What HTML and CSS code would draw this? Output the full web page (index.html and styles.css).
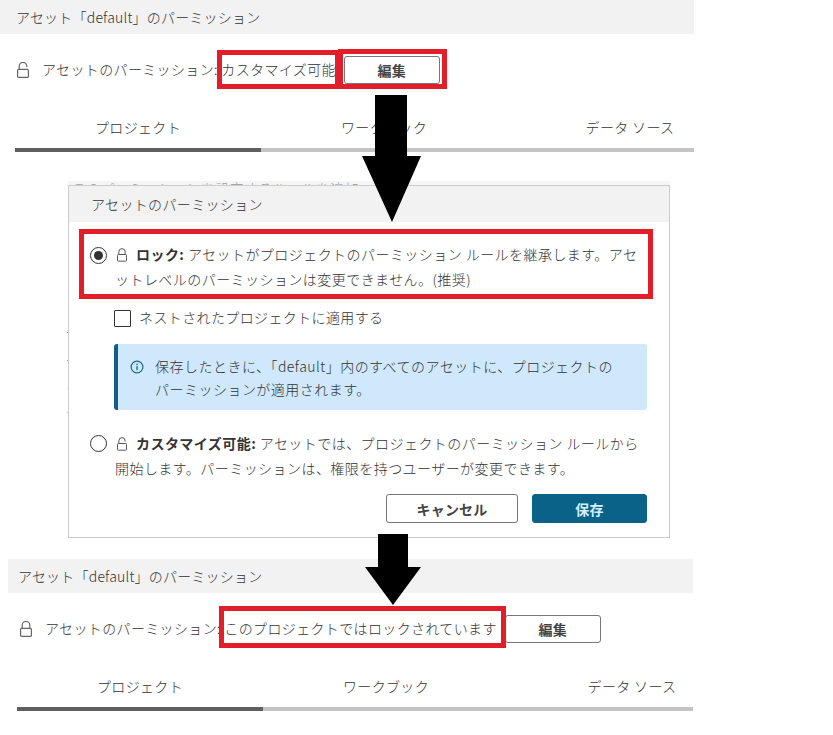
FILE: index.html
```html
<!DOCTYPE html>
<html lang="ja">
<head>
<meta charset="utf-8">
<title>アセットのパーミッション</title>
<link rel="stylesheet" href="styles.css">
</head>
<body>
<svg class="icon-defs" width="0" height="0" aria-hidden="true">
  <symbol id="lock-open" viewBox="0 0 12 16"><path d="M2.2 7V4.2a3.8 3.8 0 0 1 7.6 0v.9" fill="none" stroke="currentColor" stroke-width="1.2"/><rect x=".6" y="7.4" width="10.8" height="8" rx="1" fill="none" stroke="currentColor" stroke-width="1.2"/></symbol>
  <symbol id="lock-closed" viewBox="0 0 12 16"><path d="M2.2 7.4V4.2a3.8 3.8 0 0 1 7.6 0v3.2" fill="none" stroke="currentColor" stroke-width="1.2"/><rect x=".6" y="7.4" width="10.8" height="8" rx="1" fill="none" stroke="currentColor" stroke-width="1.2"/></symbol>
</svg>
<main class="page">
  <section class="panel panel-first">
    <h2 class="panel-title">アセット「default」のパーミッション</h2>
    <div class="perm-row">
      <svg class="lock lock-row"><use href="#lock-open"/></svg>
      <span class="perm-label">アセットのパーミッション: カスタマイズ可能</span>
      <button class="btn btn-edit">編集</button>
    </div>
    <div class="tabs">
      <div class="tab tab-active">プロジェクト</div>
      <div class="tab">ワークブック</div>
      <div class="tab">データ ソース</div>
    </div>
  </section>

  <div class="peek"><span class="peek-text">このパーミッションを設定するルールを追加</span></div>
  <section class="dialog">
    <h2 class="dialog-title">アセットのパーミッション</h2>
    <div class="option option-first">
      <span class="radio radio-on"></span>
      <p class="option-text"><svg class="lock lock-inline"><use href="#lock-closed"/></svg><b>ロック:</b> アセットがプロジェクトのパーミッション ルールを継承します。アセ<br>ットレベルのパーミッションは変更できません。(推奨)</p>
    </div>
    <label class="check-row"><span class="check"></span><span class="check-text">ネストされたプロジェクトに適用する</span></label>
    <div class="info">
      <svg class="info-icon" viewBox="0 0 14 14"><circle cx="7" cy="7" r="5.9" fill="none" stroke="currentColor" stroke-width="1.2"/><rect x="6.4" y="6" width="1.3" height="4.2" fill="currentColor"/><rect x="6.4" y="3.6" width="1.3" height="1.4" fill="currentColor"/></svg>
      <p class="info-text">保存したときに、「default」内のすべてのアセットに、プロジェクトの<br>パーミッションが適用されます。</p>
    </div>
    <div class="option option-second">
      <span class="radio"></span>
      <p class="option-text"><svg class="lock lock-inline"><use href="#lock-open"/></svg><b>カスタマイズ可能:</b> アセットでは、プロジェクトのパーミッション ルールから<br>開始します。パーミッションは、権限を持つユーザーが変更できます。</p>
    </div>
    <div class="dialog-actions">
      <button class="btn btn-cancel">キャンセル</button>
      <button class="btn btn-save">保存</button>
    </div>
  </section>

  <section class="panel panel-last">
    <h2 class="panel-title">アセット「default」のパーミッション</h2>
    <div class="perm-row">
      <svg class="lock lock-row"><use href="#lock-closed"/></svg>
      <span class="perm-label">アセットのパーミッション: このプロジェクトではロックされています</span>
      <button class="btn btn-edit">編集</button>
    </div>
    <div class="tabs">
      <div class="tab tab-active">プロジェクト</div>
      <div class="tab">ワークブック</div>
      <div class="tab">データ ソース</div>
    </div>
  </section>

  <div class="mark mark-a"></div>
  <div class="mark mark-b"></div>
  <div class="mark mark-c"></div>
  <div class="mark mark-d"></div>
  <svg class="arrow arrow-a" viewBox="0 0 59 127"><path d="M13 0H45V61H59L30 127 0 61H13Z"/></svg>
  <svg class="arrow arrow-b" viewBox="0 0 56 71"><path d="M13 0H43V33H56L28 71 0 33H13Z"/></svg>
</main>
</body>
</html>
```

FILE: styles.css
```css
* { box-sizing: border-box; }
html, body { margin: 0; padding: 0; background: #fff; }
body {
  font-family: "Noto Sans CJK JP", "Noto Sans", sans-serif;
  font-size: 14px;
  font-weight: 300;
  color: #333;
  letter-spacing: .35px;
}
.icon-defs { position: absolute; }
.page { position: relative; width: 833px; height: 735px; overflow: hidden; display: flex; flex-direction: column; }
h2, p { margin: 0; font-weight: 300; font-size: 14px; }

.panel { display: flex; flex-direction: column; overflow: hidden; flex: none; }
.panel-first { width: 694px; --head: 16px; --row: 17px; --tabs: 15px; }
.panel-last { width: 685px; margin-left: 8px; margin-top: 21px; --head: 10px; --row: 12px; --tabs: 9px; }
.panel-title { height: 34px; line-height: 34px; background: #f2f2f2; padding-left: var(--head); letter-spacing: .2px; }
.perm-row { display: flex; align-items: center; height: 28px; margin-top: 22px; padding-left: var(--row); }
.lock { color: #666; flex: none; }
.lock-row { width: 12px; height: 16px; margin-right: 13px; }
.perm-label { white-space: pre; margin-bottom: 2px; letter-spacing: .36px; }
.btn {
  font-family: inherit; font-size: 14px; font-weight: 700; letter-spacing: .2px;
  background: #fff; color: #444; border: 1px solid #777; border-radius: 3px; padding: 0;
}
.btn-edit { width: 96px; height: 28px; margin-left: 8px; }
.panel-last .btn-edit { width: 96px; }
.tabs { display: flex; margin-top: 28px; margin-left: var(--tabs); width: 738px; }
.tab { width: 246px; height: 40px; line-height: 30px; text-align: center; border-bottom: 4px solid #c4c4c4; flex: none; }
.tab-active { border-bottom-color: #5f5f5f; }

.peek { width: 602px; height: 4px; margin: 29px 0 0 68px; background: #f5f5f5; overflow: hidden; flex: none; }
.peek-text { display: block; font-size: 14px; line-height: 20px; color: #999; margin-top: -3px; padding-left: 4px; white-space: nowrap; }
.dialog { position: relative; width: 602px; height: 353px; margin-left: 68px; border: 1px solid #ccc; flex: none; display: flex; flex-direction: column; }
.dialog::before { content: ""; position: absolute; left: -2px; top: 146px; width: 1px; height: 1px; background: #888; box-shadow: 0 28px #999, 0 56px #ddd, 0 80px #bbb; }
.dialog-title { height: 36px; line-height: 36px; background: #f2f2f2; padding-left: 22px; }
.option { display: flex; gap: 8px; padding-left: 21px; }
.option-first { margin-top: 20px; }
.option-second { margin-top: 21px; }
.option-text { line-height: 25px; white-space: nowrap; letter-spacing: .45px; }
.option-text b { font-weight: 700; }
.radio { width: 17px; height: 17px; border: 1.3px solid #333; border-radius: 50%; margin-top: 4px; flex: none; display: flex; align-items: center; justify-content: center; }
.option-first .radio { margin-top: 5px; }
.radio-on::after { content: ""; width: 9px; height: 9px; border-radius: 50%; background: #333; }
.lock-inline { width: 10px; height: 14px; margin: 0 9px 0 2px; vertical-align: -2px; color: #555; }
.check-row { display: flex; align-items: center; gap: 8px; height: 18px; margin: 17px 0 0 45px; letter-spacing: .38px; }
.check { width: 17px; height: 17px; border: 1.2px solid #333; flex: none; border-radius: 1px; }
.check-text { margin-bottom: 2px; }
.info {
  display: flex; gap: 11px; width: 533px; height: 66px; margin: 17px 0 0 45px; padding: 11px 0 0 12px;
  background: #cfe8fc; border-left: 4px solid #0f5f80; border-radius: 3px;
}
.info-icon { width: 14px; height: 14px; margin-top: 5px; color: #0f6a90; flex: none; }
.info-text { line-height: 22.5px; white-space: nowrap; letter-spacing: .48px; }
.dialog-actions { display: flex; justify-content: flex-end; gap: 14px; padding-right: 22px; margin-top: 13px; }
.btn-cancel { width: 132px; height: 29px; }
.btn-save { width: 115px; height: 29px; background: #0a6289; border-color: #0a6289; color: #d6eefa; }

.mark { position: absolute; border: 5px solid #e31e2b; }
.mark-a { left: 217px; top: 50px; width: 123px; height: 39px; }
.mark-b { left: 338px; top: 49px; width: 109px; height: 40px; }
.mark-c { left: 79px; top: 229px; width: 574px; height: 70px; }
.mark-d { left: 219px; top: 606px; width: 287px; height: 42px; }
.arrow { position: absolute; fill: #000; }
.arrow-a { left: 362px; top: 95px; width: 59px; height: 127px; }
.arrow-b { left: 365px; top: 534px; width: 56px; height: 71px; }
```
